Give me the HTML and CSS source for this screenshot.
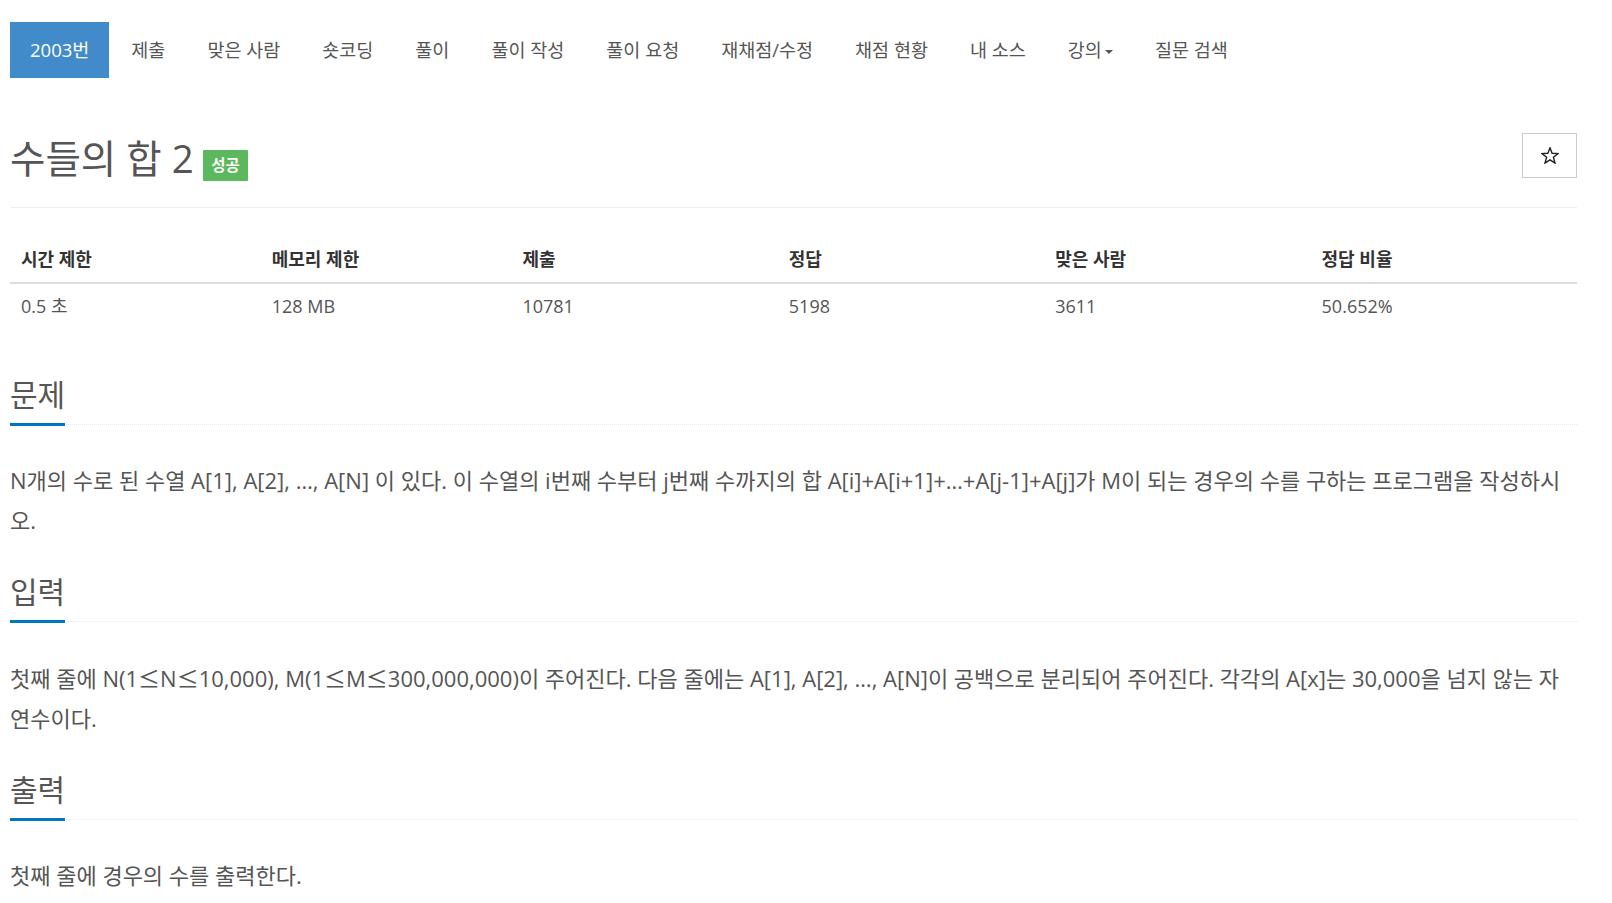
FILE: index.html
```html
<!DOCTYPE html>
<html>
<head>
    <title>2003번: 수들의 합 2</title>
    <meta charset="utf-8">
    <meta name="viewport" content="width=device-width,initial-scale=1">
    <link rel="stylesheet" href="styles.css">
</head>
<body>
<div class="wrap">
    <!-- 문제 메뉴 -->
    <ul class="tabs">
        <li class="active"><a href="#">2003번</a></li>
        <li><a href="#">제출</a></li>
        <li><a href="#">맞은 사람</a></li>
        <li><a href="#">숏코딩</a></li>
        <li><a href="#">풀이</a></li>
        <li><a href="#">풀이 작성</a></li>
        <li><a href="#">풀이 요청</a></li>
        <li><a href="#">재채점/수정</a></li>
        <li><a href="#">채점 현황</a></li>
        <li><a href="#">내 소스</a></li>
        <li><a href="#">강의<span class="caret"></span></a></li>
        <li><a href="#">질문 검색</a></li>
    </ul>

    <div class="page-header">
        <h1><span class="title">수들의 합 2</span><span class="label">성공</span></h1>
        <button class="star" type="button" aria-label="즐겨찾기">
            <svg width="18" height="17" viewBox="0 0 18 17">
                <polygon points="9,0.8 11.1,6.3 17.1,6.6 12.4,10.3 14,16.1 9,12.8 4,16.1 5.6,10.3 0.9,6.6 6.9,6.3"
                         fill="none" stroke="#222" stroke-width="1.4" stroke-linejoin="miter"/>
            </svg>
        </button>
    </div>

    <!-- 제한 / 통계 -->
    <table class="info">
        <thead>
            <tr>
                <th class="w16">시간 제한</th>
                <th class="w16">메모리 제한</th>
                <th class="w17">제출</th>
                <th class="w17">정답</th>
                <th class="w17">맞은 사람</th>
                <th class="w17">정답 비율</th>
            </tr>
        </thead>
        <tbody>
            <tr>
                <td>0.5 초 </td>
                <td>128 MB</td>
                <td>10781</td>
                <td>5198</td>
                <td>3611</td>
                <td>50.652%</td>
            </tr>
        </tbody>
    </table>

    <section class="problem">
        <div class="headline"><h2>문제</h2></div>
        <p>N개의 수로 된 수열 A[1], A[2], …, A[N] 이 있다. 이 수열의 i번째 수부터 j번째 수까지의 합 A[i]+A[i+1]+…+A[j-1]+A[j]가 M이 되는 경우의 수를 구하는 프로그램을 작성하시오.</p>
    </section>

    <section class="problem">
        <div class="headline"><h2>입력</h2></div>
        <p>첫째 줄에 N(1<span class="op">≤</span>N<span class="op">≤</span>10,000), M(1<span class="op">≤</span>M<span class="op">≤</span>300,000,000)이 주어진다. 다음 줄에는 A[1], A[2], …, A[N]이 공백으로 분리되어 주어진다. 각각의 A[x]는 30,000을 넘지 않는 자연수이다.</p>
    </section>

    <section class="problem">
        <div class="headline"><h2>출력</h2></div>
        <p>첫째 줄에 경우의 수를 출력한다.</p>
    </section>
</div>
</body>
</html>
```

FILE: styles.css
```css
body {
    margin: 0;
    background: #fff;
    color: #555;
    font-family: "Open Sans", "Noto Sans CJK KR", sans-serif;
}

.wrap {
    padding: 0 35px 0 10px;
}

/* 상단 탭 메뉴 */
.tabs {
    display: flex;
    list-style: none;
    margin: 22px 0 0;
    padding: 0;
}

.tabs li + li {
    margin-left: 2px;
}

.tabs a {
    display: block;
    padding: 18px 20px;
    font-size: 18.5px;
    line-height: 20px;
    color: #555;
    text-decoration: none;
}

.tabs .active a {
    background: #428bca;
    color: #fff;
}

.caret {
    display: inline-block;
    width: 0;
    height: 0;
    margin-left: 3px;
    vertical-align: middle;
    border-top: 4px solid #555;
    border-left: 4px solid transparent;
    border-right: 4px solid transparent;
}

/* 제목 */
.page-header {
    display: flex;
    justify-content: space-between;
    align-items: flex-start;
    margin-top: 55px;
    padding-bottom: 26px;
    border-bottom: 1px solid #eee;
}

.page-header h1 {
    display: flex;
    align-items: flex-start;
    margin: 3px 0 0;
    font-size: 38.5px;
    font-weight: 400;
    line-height: 44px;
    color: #555;
}

.label {
    margin: 14px 0 0 9px;
    padding: 0 8.5px;
    background: #5cb85c;
    color: #fff;
    font-size: 15.5px;
    font-weight: bold;
    line-height: 31px;
    border-radius: 1px;
}

.star {
    display: flex;
    align-items: center;
    justify-content: center;
    width: 55px;
    height: 45px;
    padding: 0 0 1px;
    background: #fff;
    border: 1px solid #ccc;
}

/* 시간/메모리 표 */
.info {
    width: 100%;
    border-collapse: collapse;
    margin: 29px 0 46px;
    font-size: 18px;
}

.info th,
.info td {
    padding: 10px 11px;
    line-height: 25px;
    text-align: left;
}

.info th {
    color: #333;
    font-weight: bold;
    border-bottom: 2px solid #ddd;
}

.w16 {
    width: 16%;
}

.w17 {
    width: 17%;
}

/* 문제 / 입력 / 출력 */
.headline {
    display: flex;
    margin: 32px 0 35px;
    border-bottom: 1px dotted #e4e9f0;
}

.headline h2 {
    margin: 0 0 -2px;
    padding-bottom: 8px;
    font-size: 30px;
    font-weight: 400;
    line-height: 40px;
    color: #555;
    border-bottom: 3px solid #0076c0;
}

.problem p {
    margin: 0;
    font-size: 22px;
    line-height: 40px;
}

/* 부등호는 전각 글꼴로 */
.op {
    font-family: "Noto Sans CJK KR", sans-serif;
}
```
